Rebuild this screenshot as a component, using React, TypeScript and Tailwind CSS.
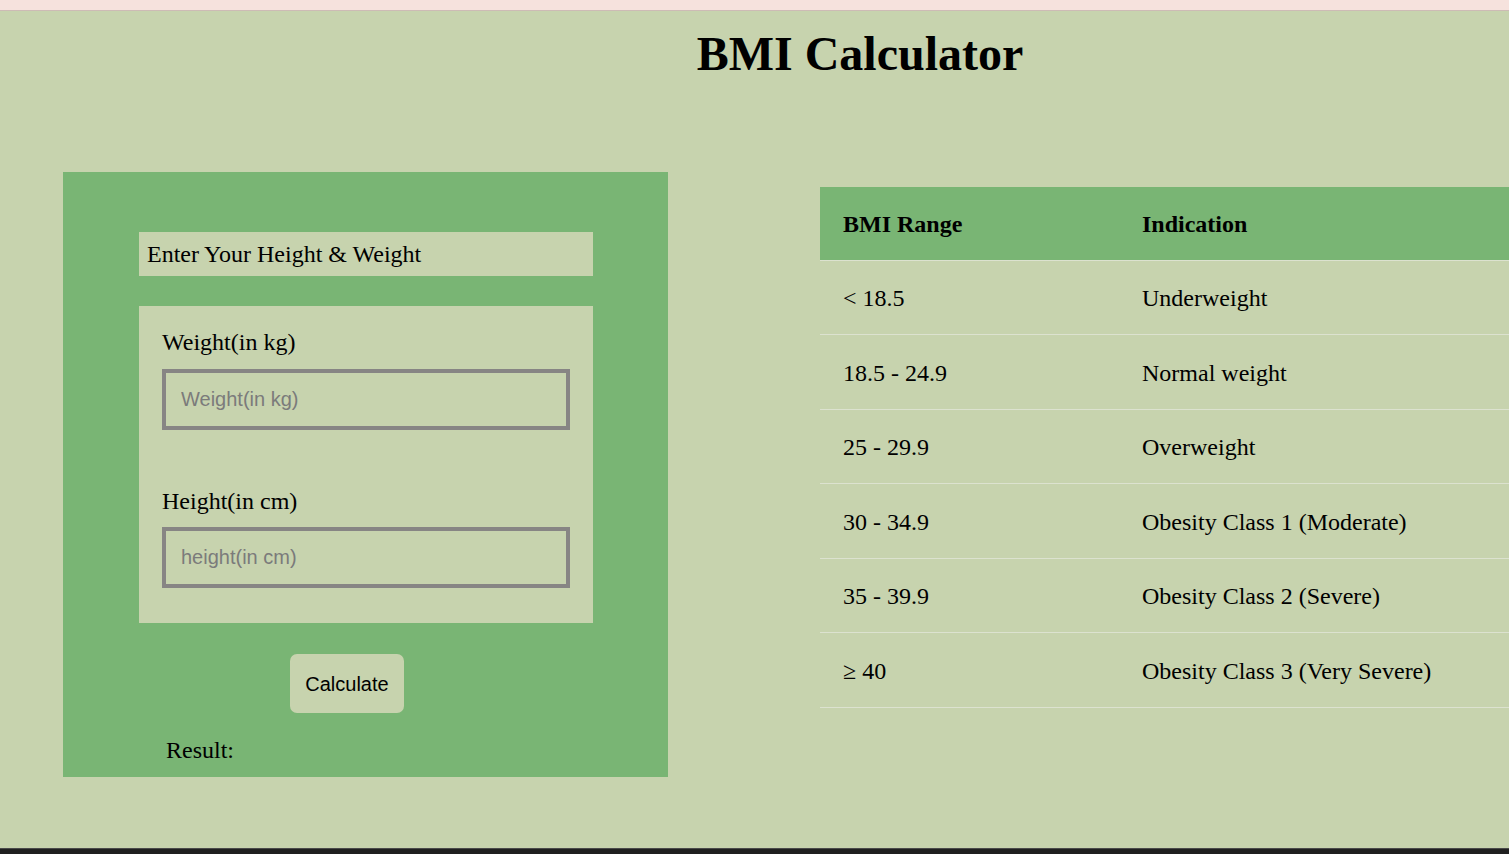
import { useState } from "react";

const ranges = [
  { range: "< 18.5", label: "Underweight" },
  { range: "18.5 - 24.9", label: "Normal weight" },
  { range: "25 - 29.9", label: "Overweight" },
  { range: "30 - 34.9", label: "Obesity Class 1 (Moderate)" },
  { range: "35 - 39.9", label: "Obesity Class 2 (Severe)" },
  { range: "≥ 40", label: "Obesity Class 3 (Very Severe)" },
];

export default function App() {
  const [weight, setWeight] = useState("");
  const [height, setHeight] = useState("");
  const [result, setResult] = useState("");

  const calculate = () => {
    const w = parseFloat(weight);
    const h = parseFloat(height) / 100;
    if (!w || !h) {
      setResult("");
      return;
    }
    setResult((w / (h * h)).toFixed(1));
  };

  return (
    <div className="h-[854px] w-full overflow-hidden flex flex-col bg-[#c7d3ae] font-['Liberation_Serif',serif] text-black">
      <div className="h-[11px] shrink-0 bg-[#f6e2dd] border-b border-[#cdbbb5]" />

      <div className="flex-1 w-[1720px] flex flex-col">
        <h1 className="mt-[15px] text-center text-[48px] font-bold leading-[55px]">BMI Calculator</h1>

        <div className="mt-[91px] flex items-start">
          {/* form card */}
          <div className="ml-[63px] w-[605px] h-[605px] bg-[#79b574] pt-[60px] flex flex-col">
            <div className="ml-[76px] w-[454px] h-[44px] bg-[#c7d3ae] px-[8px] text-[24px] leading-[44px]">
              Enter Your Height &amp; Weight
            </div>

            <div className="ml-[76px] mt-[30px] w-[454px] h-[317px] bg-[#c7d3ae] px-[23px] pt-[22px] flex flex-col">
              <label className="text-[24px] leading-[28px]">Weight(in kg)</label>
              <input
                value={weight}
                onChange={(e) => setWeight(e.target.value)}
                placeholder="Weight(in kg)"
                className="mt-[13px] w-[408px] h-[61px] border-4 border-[#878584] bg-transparent px-[15px] font-['Liberation_Sans',sans-serif] text-[20px] outline-none placeholder:text-[#7b7b7b]"
              />
              <label className="mt-[57px] text-[24px] leading-[28px]">Height(in cm)</label>
              <input
                value={height}
                onChange={(e) => setHeight(e.target.value)}
                placeholder="height(in cm)"
                className="mt-[12px] w-[408px] h-[61px] border-4 border-[#878584] bg-transparent px-[15px] font-['Liberation_Sans',sans-serif] text-[20px] outline-none placeholder:text-[#7b7b7b]"
              />
            </div>

            <button
              onClick={calculate}
              className="ml-[227px] mt-[31px] w-[114px] h-[59px] rounded-[7px] bg-[#c7d3ae] font-['Liberation_Sans',sans-serif] text-[20px] text-black"
            >
              Calculate
            </button>

            <p className="ml-[103px] mt-[23px] text-[24px] leading-[28px]">Result: {result}</p>
          </div>

          {/* reference table */}
          <table className="ml-[152px] mt-[15px] w-[820px] border-collapse text-left text-[24px]">
            <thead>
              <tr className="bg-[#79b574] border-b border-[#dce2cf]">
                <th className="w-[299px] px-[23px] h-[73px] pt-[2px] font-bold">BMI Range</th>
                <th className="px-[23px] h-[73px] pt-[2px] font-bold">Indication</th>
              </tr>
            </thead>
            <tbody>
              {ranges.map((r) => (
                <tr key={r.range} className="border-b border-[#dce2cf]">
                  <td className="px-[23px] h-[74.5px] pt-[2px] font-normal">{r.range}</td>
                  <td className="px-[23px] h-[74.5px] pt-[2px] font-normal">{r.label}</td>
                </tr>
              ))}
            </tbody>
          </table>
        </div>
      </div>

      <div className="h-[6px] shrink-0 bg-[#202020] border-t border-[#4a4a4a]" />
    </div>
  );
}
